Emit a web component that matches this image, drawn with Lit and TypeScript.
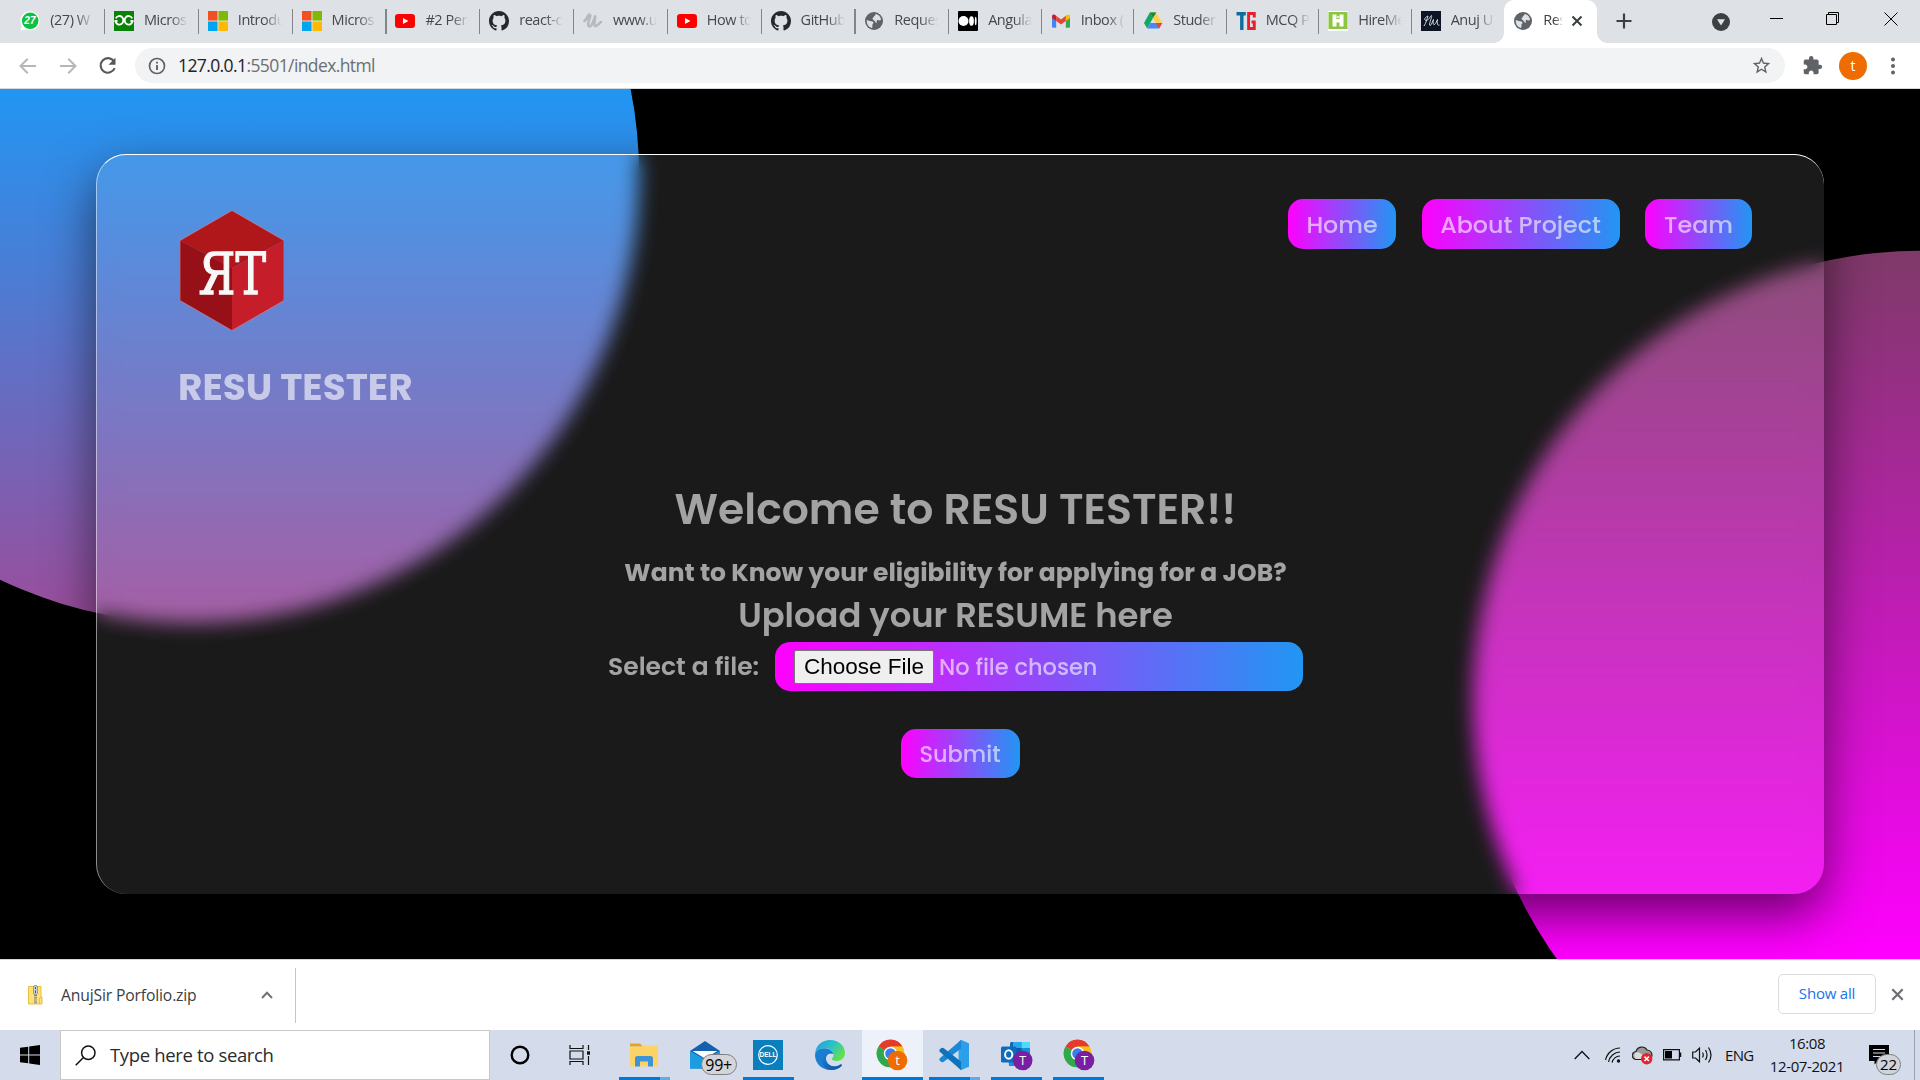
import { LitElement, html, svg, css, nothing } from "lit";
import { customElement } from "lit/decorators.js";
import { classMap } from "lit/directives/class-map.js";

const uiFont = css`"Open Sans", "Noto Sans", "Liberation Sans", sans-serif`;
const pageFont = css`Poppins, Inter, "Liberation Sans", sans-serif`;

/* ---------- favicons, 20x20 ---------- */

const fav = (body: unknown) => html`<svg class="fav" width="20" height="20" viewBox="0 0 20 20">${body}</svg>`;

const icons = {
  whatsapp: fav(svg`<path d="M0.600 19.600 L1.800 14.600 A9.600 9.400 0 1 1 6 18.300 Z" fill="#fff"/><circle cx="10.200" cy="9.800" r="8.300" fill="#0fc143"/><text x="9.900" y="13.400" font-size="10" font-weight="700" font-family="Liberation Sans, sans-serif" font-style="italic" text-anchor="middle" fill="#fff">27</text>`),
  gfg: fav(svg`<rect width="20" height="20" fill="#0a8205"/><path d="M1.800 7.300 A4 4.300 0 1 1 1.500 10.500 M18.200 7.300 A4 4.300 0 1 0 18.500 10.500 M0.500 10 H3.500 M16.500 10 H19.500" fill="none" stroke="#fff" stroke-width="1.900"/>`),
  microsoft: fav(svg`<rect width="9.500" height="9.500" fill="#f25022"/><rect x="10.500" width="9.500" height="9.500" fill="#7fba00"/><rect y="10.500" width="9.500" height="9.500" fill="#00a4ef"/><rect x="10.500" y="10.500" width="9.500" height="9.500" fill="#ffb900"/>`),
  youtube: fav(svg`<rect y="3" width="20" height="14" rx="3.200" fill="#f00"/><path d="M8 7 L13.400 10 L8 13 Z" fill="#fff"/>`),
  github: fav(svg`<path transform="scale(1.25)" fill="#24292e" d="M8 0C3.58 0 0 3.58 0 8c0 3.54 2.29 6.53 5.47 7.59.4.07.55-.17.55-.38 0-.19-.01-.82-.01-1.49-2.01.37-2.53-.49-2.69-.94-.09-.23-.48-.94-.82-1.13-.28-.15-.68-.52-.01-.53.63-.01 1.08.58 1.23.82.72 1.21 1.87.87 2.33.66.07-.52.28-.87.51-1.07-1.78-.2-3.64-.89-3.64-3.95 0-.87.31-1.59.82-2.15-.08-.2-.36-1.02.08-2.12 0 0 .67-.21 2.2.82.64-.18 1.32-.27 2-.27s1.36.09 2 .27c1.53-1.04 2.2-.82 2.2-.82.44 1.1.16 1.92.08 2.12.51.56.82 1.27.82 2.15 0 3.07-1.87 3.75-3.65 3.95.29.25.54.73.54 1.48 0 1.07-.01 1.93-.01 2.2 0 .21.15.46.55.38A8.01 8.01 0 0 0 16 8c0-4.42-3.58-8-8-8z"/>`),
  udemy: fav(svg`<path d="M1.500 10 C4 8 5 5 5.500 4 C6 3 8 3.500 7 6 C5.500 10 4 15 6.500 15.500 C9.500 15.500 11 8 12.500 4.500 C12 8 10.500 14 12 15 C13.500 15.800 16 12.500 18 11" fill="none" stroke="#b6b9bd" stroke-width="2.600" stroke-linecap="round"/>`),
  globe: fav(svg`<circle cx="10" cy="10" r="9" fill="#5f6368"/><path d="M2.800 9 C5 9.500 6.500 10.500 8.500 10.500 C10 11 9.600 12.600 8.600 13 C8 14 9 15.500 8 17 C4.500 16.200 2.500 13 2.800 9 Z M11.500 3 C14 3.300 16.500 5.200 17.100 8.500 C15.500 10.500 14.500 8.500 13 9.200 C12 10.500 13.500 11.200 12.500 12 C11 11 10.500 9.500 9 8.500 C7.500 7.500 9.500 7 9.600 6 C9.500 5 11.500 5 11.500 3 Z" fill="#dee1e6"/>`),
  medium: fav(svg`<rect width="20" height="20" rx="1" fill="#000"/><circle cx="5.500" cy="10" r="5" fill="#fff"/><ellipse cx="13.500" cy="10" rx="2.400" ry="4.700" fill="#fff"/><ellipse cx="17.700" cy="10" rx="0.900" ry="4.200" fill="#fff"/>`),
  gmail: fav(svg`<path d="M1 5 V15.500 Q1 16.800 2.300 16.800 H5.200 V8.500 Z" fill="#4285f4"/><path d="M19 5 V15.500 Q19 16.800 17.700 16.800 H14.800 V8.500 Z" fill="#34a853"/><path d="M14.800 4.800 L16.200 3.800 Q19 2.600 19 5.600 V7 L14.800 10 Z" fill="#fbbc04"/><path d="M1 7 V5.600 Q1 2.600 3.800 3.800 L5.200 4.800 V10 Z" fill="#c5221f"/><path d="M5.200 4.800 L10 8.400 L14.800 4.800 V10 L10 13.600 L5.200 10 Z" fill="#ea4335"/>`),
  drive: fav(svg`<path d="M6.800 1.500 H13.200 L10 7 L4.200 17.500 L1 12 Z" fill="#11a861"/><path d="M6.800 1.500 H13.200 L19.200 12 H12.900 Z" fill="#ffcf48"/><path d="M4.200 17.500 L7.300 12 H19.200 L16 17.500 Z" fill="#4688f4"/><path d="M13 12 H19.200 L16.100 17.400 Z" fill="#ea4335"/><path d="M6.800 1.500 H13.200 L10 7 Z" fill="#0d8b42"/>`),
  tg: fav(svg`<path d="M0.500 2.800 H9.800 M5.800 1.500 V19" fill="none" stroke="#0d6e9e" stroke-width="3.400"/><path d="M18.300 6.500 V2.500 H12.600 V17.500 H18.300 V11 H15.500" fill="none" stroke="#e8202c" stroke-width="2.900"/>`),
  hire: fav(svg`<rect width="20" height="20" fill="#fff"/><path d="M0.500 1 H19.500 V18 H0.500 Z" fill="#8cc63f"/><path d="M4.500 3.500 H8.500 V8 H11.500 V3.500 H15.500 V15.500 H11.500 V11.500 H8.500 V15.500 H4.500 Z" fill="#fff"/><circle cx="10" cy="6" r="1" fill="#fff"/>`),
  anuj: fav(svg`<rect width="20" height="20" fill="#0d1424"/><path d="M3 15 C5 12 6 8 7 5 C4 6 2.500 9 5 9.500 C8 9.500 9 5 10.500 4.500 C11.500 6 7 14 9 14.500 C11 14 11.500 9.500 12.500 8.500 C12 12 12 14 13.500 13.500 C15 12.500 15.500 10 16.500 8.500 C16 12 16 15 18.500 14" fill="none" stroke="#dfe3ea" stroke-width="0.900"/>`),
};

const tabs: Array<[keyof typeof icons, string]> = [
  ["whatsapp", "(27) W"],
  ["gfg", "Micros"],
  ["microsoft", "Introdu"],
  ["microsoft", "Micros"],
  ["youtube", "#2 Pers"],
  ["github", "react-c"],
  ["udemy", "www.u"],
  ["youtube", "How to"],
  ["github", "GitHub"],
  ["globe", "Reques"],
  ["medium", "Angula"],
  ["gmail", "Inbox ("],
  ["drive", "Studer"],
  ["tg", "MCQ P"],
  ["hire", "HireMe"],
  ["anuj", "Anuj U"],
];

@customElement("tab-strip")
class TabStrip extends LitElement {
  static styles = css`
    :host { display: flex; height: 43px; background: #dee1e6; padding-left: 11px; font: 14.500px/20px ${uiFont}; color: #45494d; }
    .tab { display: flex; align-items: center; box-sizing: border-box; width: 93.800px; height: 43px; padding: 0 0 1px 9.200px; flex: none; position: relative; }
    .narrow { width: 92.500px; }
    .tab:not(.last)::after { content: ""; position: absolute; right: -0.500px; top: 9px; width: 1.300px; height: 25px; background: #82868b; }
    .fav { flex: none; display: block; }
    .label { margin: -2px 0 0 10px; width: 44px; overflow: hidden; white-space: nowrap; letter-spacing: -0.450px; -webkit-mask-image: linear-gradient(90deg, #000 60%, transparent 100%); mask-image: linear-gradient(90deg, #000 60%, transparent 100%); }
    .active { background: #fff; border-radius: 10px 10px 0 0; width: 93px; color: #3c4043; }
    .active .label { width: 20px; }
    .active::before { content: ""; position: absolute; left: -10px; right: -10px; bottom: 0; height: 10px; background: radial-gradient(circle at 0 0, transparent 9.500px, #fff 10px) 0 0 / 10px 10px no-repeat, radial-gradient(circle at 100% 0, transparent 9.500px, #fff 10px) 100% 0 / 10px 10px no-repeat; }
    .x { margin-left: 8px; flex: none; }
    .plus { margin: 13px 0 0 19px; }
    .controls { margin-left: auto; display: flex; align-items: flex-start; padding-right: 22px; }
    .drop { margin: 13px 40px 0 0; }
    .min { margin: 12px 43px 0 0; }
    .max { margin: 12px 44px 0 0; }
    .close { margin-top: 12px; }
  `;
  render() {
    return html`
      ${tabs.map(([icon, text], i) => html`<div class=${classMap({ tab: true, narrow: i > 9, last: i === tabs.length - 1 })}>${icons[icon]}<span class="label">${text}</span></div>`)}
      <div class="tab last active">
        ${icons.globe}<span class="label">Res</span>
        <svg class="x" width="12" height="12" viewBox="0 0 12 12"><path d="M1.500 1.500 L10.500 10.500 M10.500 1.500 L1.500 10.500" stroke="#3c4043" stroke-width="2.100" fill="none"/></svg>
      </div>
      <svg class="plus" width="16" height="16" viewBox="0 0 16 16"><path d="M8 0.500 V15.500 M0.500 8 H15.500" stroke="#3c4043" stroke-width="2.200"/></svg>
      <div class="controls">
        <svg class="drop" width="18" height="18" viewBox="0 0 18 18"><circle cx="9" cy="9" r="9" fill="#3c4043"/><path d="M5 6.300 H13 L9 12.600 Z" fill="#dee1e6"/></svg>
        <svg class="min" width="13" height="14" viewBox="0 0 13 14"><path d="M0 6.500 H13" stroke="#000"/></svg>
        <svg class="max" width="14" height="14" viewBox="0 0 14 14"><path d="M0.500 2.500 H10.500 V12.500 H0.500 Z M2.500 2.500 V0.500 H12.500 V10.500 H10.500" fill="none" stroke="#000"/></svg>
        <svg class="close" width="14" height="14" viewBox="0 0 14 14"><path d="M0.500 0.500 L13.500 13.500 M13.500 0.500 L0.500 13.500" stroke="#000" fill="none"/></svg>
      </div>`;
  }
}

@customElement("address-bar")
class AddressBar extends LitElement {
  static styles = css`
    :host { display: flex; align-items: center; box-sizing: border-box; height: 46px; background: #fff; border-bottom: 1px solid #d5d7da; padding: 0 21px 0 18px; font: 17.500px/24px ${uiFont}; }
    svg { display: block; flex: none; }
    .fwd { margin-left: 20px; }
    .reload { margin-left: 20px; }
    .box { display: flex; align-items: center; flex: 1; height: 35px; margin: 0 17px 0 17px; border-radius: 18px; background: #f1f3f4; box-sizing: border-box; padding: 0 13px 0 13px; }
    .url { margin: -2px 0 0 12px; color: #6b6f73; letter-spacing: -0.600px; }
    .host { color: #202124; }
    .star { margin-left: auto; }
    .avatar { width: 28px; height: 28px; border-radius: 50%; background: #ef6c00; color: #fff; font-size: 14px; line-height: 27px; text-align: center; margin: 0 23px 0 16px; }
    .dots { margin-right: 3px; }
  `;
  render() {
    return html`
      <svg width="20" height="20" viewBox="0 0 20 20"><path d="M18 10 H3 M9.700 2.800 L2.500 10 L9.700 17.200" fill="none" stroke="#b5b7ba" stroke-width="2"/></svg>
      <svg class="fwd" width="20" height="20" viewBox="0 0 20 20"><path d="M2 10 H17 M10.300 2.800 L17.500 10 L10.300 17.200" fill="none" stroke="#b5b7ba" stroke-width="2"/></svg>
      <svg class="reload" width="20" height="20" viewBox="0 0 20 20"><path d="M15.800 5 A7.300 7.300 0 1 0 16.700 12.200" fill="none" stroke="#54585c" stroke-width="2.100"/><path d="M17.500 1.800 V8.800 H10.500 Z" fill="#54585c"/></svg>
      <div class="box">
        <svg width="18" height="18" viewBox="0 0 18 18"><circle cx="9" cy="9" r="7.500" fill="none" stroke="#5f6368" stroke-width="1.700"/><path d="M9 8 V13 M9 4.800 V6.600" stroke="#5f6368" stroke-width="1.900"/></svg>
        <span class="url"><span class="host">127.0.0.1</span>:5501/index.html</span>
        <svg class="star" width="21" height="21" viewBox="0 0 24 24"><path fill="#5f6368" d="M22 9.240l-7.190-.620L12 2 9.190 8.630 2 9.240l5.460 4.730L5.820 21 12 17.270 18.180 21l-1.630-7.030L22 9.240zM12 15.400l-3.760 2.270 1-4.280-3.320-2.880 4.380-.380L12 6.100l1.710 4.040 4.380.380-3.320 2.880 1 4.280L12 15.400z"/></svg>
      </div>
      <svg width="21" height="21" viewBox="0 0 24 24"><path fill="#5f6368" d="M20.500 11H19V7c0-1.100-.900-2-2-2h-4V3.500a2.500 2.500 0 0 0-5 0V5H4c-1.100 0-1.990.900-1.990 2v3.800H3.500c1.490 0 2.700 1.210 2.700 2.700s-1.210 2.700-2.700 2.700H2V20c0 1.100.900 2 2 2h3.800v-1.500c0-1.490 1.210-2.700 2.700-2.700s2.700 1.210 2.700 2.700V22H17c1.100 0 2-.900 2-2v-4h1.500a2.500 2.500 0 0 0 0-5z"/></svg>
      <div class="avatar">t</div>
      <svg class="dots" width="6" height="18" viewBox="0 0 6 18"><circle cx="3" cy="2.500" r="2" fill="#5f6368"/><circle cx="3" cy="9" r="2" fill="#5f6368"/><circle cx="3" cy="15.500" r="2" fill="#5f6368"/></svg>`;
  }
}

@customElement("resume-page")
class ResumePage extends LitElement {
  static styles = css`
    :host { display: flex; align-items: center; justify-content: center; position: relative; overflow: hidden; height: 870px; background: #000; font: 500 23.750px/34px ${pageFont}; color: rgba(255, 255, 255, 0.6); isolation: isolate; }
    :host::before, :host::after { content: ""; position: absolute; inset: 0; z-index: -1; }
    :host::before { background: linear-gradient(#614746, #f0f); clip-path: circle(30% at right 70%); }
    :host::after { background: linear-gradient(#2196f3, #e91e63); clip-path: circle(30% at 10% 10%); }
    .card { box-sizing: border-box; width: 1728px; height: 740px; border-radius: 30px; background: rgba(255, 255, 255, 0.1); border-top: 1px solid #fff; border-left: 1px solid rgba(255, 255, 255, 0.5); box-shadow: 0 20px 50px rgba(0, 0, 0, 0.58); backdrop-filter: blur(10px); display: flex; flex-direction: column; }
    .head { display: flex; justify-content: space-between; align-items: flex-start; height: 329px; box-sizing: border-box; padding: 44px 72px 0 83px; }
    .brand { padding-top: 11px; }
    .logo { display: block; }
    .name { margin: 32px 0 0 -2px; font-size: 37.500px; line-height: 48px; font-weight: 700; }
    .nav { display: flex; gap: 25.500px; }
    .pill { display: flex; align-items: center; justify-content: center; height: 50px; border-radius: 15px; background: linear-gradient(90deg, #f0f, #2196f3); box-sizing: border-box; white-space: nowrap; }
    .nav .pill { padding-top: 2px; }
    .home { width: 108px; } .about { width: 198px; } .team { width: 107px; }
    .main { display: flex; flex-direction: column; align-items: center; padding-right: 10px; }
    .title { margin: 0; font-size: 42.500px; line-height: 50px; font-weight: 600; }
    .ask { margin: 22px 0 0; font-size: 25px; line-height: 34px; font-weight: 700; }
    .upload { margin: 2px 0 0; font-size: 33.750px; line-height: 48px; font-weight: 600; }
    .row { display: flex; align-items: center; margin-top: 2px; }
    .select { font-size: 25px; font-weight: 600; width: 167px; white-space: nowrap; }
    .file { width: 528px; height: 49px; justify-content: flex-start; padding-left: 19px; font-size: 22.500px; }
    .choose { box-sizing: border-box; width: 140px; height: 34px; border: 1px solid #767676; border-radius: 2px; background: #efefef; color: #000; font: 22.500px/31px "Liberation Sans", sans-serif; text-align: center; padding: 0; white-space: nowrap; }
    .none { margin-left: 5px; }
    .submit { margin: 38px 0 0 9px; width: 119px; height: 49px; border: 0; font: inherit; font-size: 22.500px; color: inherit; padding: 1px 0 0; }
  `;
  render() {
    return html`
      <div class="card">
        <div class="head">
          <div class="brand">
            <svg class="logo" width="104" height="121" viewBox="0 0 104 121">
              <path d="M52 0.500 L104 30.500 L52 58 L0 30.500 Z" fill="#b0171b"/>
              <path d="M0 30.500 L52 58 V120.500 L0 90.500 Z" fill="#981017"/>
              <path d="M104 30.500 L52 58 V120.500 L104 90.500 Z" fill="#c61d2a"/>
              <path d="M52 0.500 L104 30.500 V90.500 L52 120.500 L0 90.500 V30.500 Z" fill="none" stroke="#d98a92" stroke-width="0.600"/>
              <text x="18.500" y="84" font-family="DejaVu Serif, serif" font-size="58" fill="#f8f8f8" stroke="#f8f8f8" stroke-width="1.300" textLength="67.500" lengthAdjust="spacingAndGlyphs">ЯT</text>
            </svg>
            <h1 class="name">RESU TESTER</h1>
          </div>
          <nav class="nav">
            <a class="pill home">Home</a>
            <a class="pill about">About Project</a>
            <a class="pill team">Team</a>
          </nav>
        </div>
        <div class="main">
          <h1 class="title">Welcome to RESU TESTER!!</h1>
          <h3 class="ask">Want to Know your eligibility for applying for a JOB?</h3>
          <h2 class="upload">Upload your RESUME here</h2>
          <div class="row">
            <label class="select">Select a file:</label>
            <div class="pill file"><button class="choose">Choose File</button><span class="none">No file chosen</span></div>
          </div>
          <button class="pill submit">Submit</button>
        </div>
      </div>`;
  }
}

@customElement("download-shelf")
class DownloadShelf extends LitElement {
  static styles = css`
    :host { display: flex; align-items: center; box-sizing: border-box; height: 71px; background: #fff; border-top: 1px solid #d5d5d5; padding: 0 16px 0 27px; font: 15px/20px ${uiFont}; color: #3c4043; }
    svg { display: block; flex: none; }
    .item { display: flex; align-items: center; box-sizing: border-box; width: 269px; height: 55px; border-right: 1px solid #c4c4c4; padding-right: 22px; }
    .name { margin: 0 0 0 18px; font-size: 15.700px; letter-spacing: -0.150px; white-space: nowrap; }
    .up { margin-left: auto; }
    .all { margin: -3px 15px 0 auto; width: 98px; height: 40px; box-sizing: border-box; border: 1px solid #dadce0; border-radius: 5px; color: #1a73e8; font-size: 15px; line-height: 36px; text-align: center; letter-spacing: -0.200px; }
    .x { margin-top: -1px; }
  `;
  render() {
    return html`
      <div class="item">
        <svg width="16" height="20" viewBox="0 0 16 20"><path d="M1.500 1.500 H14 V12 H15 V19 H1.500 Z" fill="#fde27a" stroke="#e9bf3f"/><path d="M14 12 Q12.500 12 12.500 14 V19" fill="none" stroke="#e9bf3f"/><rect x="6.500" y="0.500" width="4" height="9" rx="1.500" fill="#c9cfd4" stroke="#848b90" stroke-width="0.800"/><path d="M8.500 2 V4 M8.500 5.500 V8" stroke="#555"/><path d="M8.500 10 V19" stroke="#7d8487" stroke-width="3" stroke-dasharray="1.200 1"/></svg>
        <span class="name">AnujSir Porfolio.zip</span>
        <svg class="up" width="12" height="8" viewBox="0 0 12 8"><path d="M1 7 L6 1.800 L11 7" fill="none" stroke="#707478" stroke-width="2"/></svg>
      </div>
      <div class="all">Show all</div>
      <svg class="x" width="13" height="13" viewBox="0 0 13 13"><path d="M1.300 1.300 L11.700 11.700 M11.700 1.300 L1.300 11.700" stroke="#6b6f73" stroke-width="2.200"/></svg>`;
  }
}

/* ---------- taskbar app icons, 34x34 ---------- */

const app = (body: unknown) => html`<svg width="34" height="34" viewBox="0 0 34 34">${body}</svg>`;

const chrome = (badge: string, letter: string) => app(svg`
  <circle cx="15.500" cy="15.500" r="13.800" fill="#fbc116"/>
  <path d="M15.500 15.500 L3.500 8.600 A13.800 13.800 0 0 1 27.500 8.600 H15.500 Z" fill="#e33b2e"/>
  <path d="M3.500 8.600 A13.800 13.800 0 0 0 15.500 29.300 L21.500 19 L15.500 15.500 Z" fill="#2da94f"/>
  <path d="M15.500 8.700 H27.400 A13.800 13.800 0 0 1 28.800 12 H17 Z" fill="#fbc116"/>
  <circle cx="15.500" cy="15.500" r="6.800" fill="#fff"/><circle cx="15.500" cy="15.500" r="5.300" fill="#3b7ded"/>
  <circle cx="22.500" cy="22.500" r="9.800" fill="${badge}"/>
  <text x="22.500" y="27" font-size="13" font-family="Open Sans, sans-serif" text-anchor="middle" fill="#fff">${letter}</text>`);

const explorer = app(svg`<path d="M3 5.500 H13 L16 8.500 H3 Z" fill="#e8a317"/><path d="M3 8.800 H14 L16.500 7.500 H31 V27.500 Q31 28.500 30 28.500 H4 Q3 28.500 3 27.500 Z" fill="#fdd365"/><path d="M8 28.500 V20.500 Q8 18 10.500 18 H23.500 Q26 18 26 20.500 V28.500 H21 V23.500 H13 V28.500 Z" fill="#3f94d8"/>`);
const mail = app(svg`<path d="M1 13 L16 3 L31 13 V30.500 H1 Z" fill="#1460ae"/><path d="M1 13 L16 21.500 L31 13 V30.500 H1 Z" fill="#1b9de2"/><path d="M3.500 13 H28.500 L16 20.500 Z" fill="#fff"/>`);
const dell = app(svg`<rect x="2" y="2" width="30" height="30" fill="#0a7fbd"/><circle cx="17" cy="17" r="9.300" fill="none" stroke="#fff" stroke-width="1.200"/><text x="17" y="19.400" font-size="6.500" font-weight="700" font-family="Liberation Sans, sans-serif" text-anchor="middle" fill="#fff">DELL</text>`);
const edge = html`<svg width="34" height="34" viewBox="0 0 34 34">
  <defs>
    <linearGradient id="e1" x1="0" y1="0" x2="1" y2="0.600"><stop offset="0" stop-color="#1e9de4"/><stop offset="0.550" stop-color="#2bc3c4"/><stop offset="1" stop-color="#66e04c"/></linearGradient>
    <linearGradient id="e2" x1="0" y1="0" x2="1" y2="1"><stop offset="0" stop-color="#1b86d8"/><stop offset="1" stop-color="#114f9c"/></linearGradient>
  </defs>
  <path d="M2.200 15 C3 7 9.500 2 17 2 C26 2 32 8 32 15 C32 20.500 27.500 23 23.500 23 C20.500 23 18.500 22 18.900 20.500 C20 19.500 20.500 18.500 20.500 17 C20.500 13.500 17.500 10.500 12.500 10 C7.500 9.700 3.800 12 2.200 15 Z" fill="url(#e1)"/>
  <path d="M2.200 15 C4 11.500 8 9.800 12.500 10.300 C16 10.700 19.500 12.500 20.400 16 C15.500 13.500 12.500 17.500 13 21.500 C13.800 27 20.500 30.500 26.500 27 C28.500 26 29.500 27 28.500 28 C25.500 31 21 32.300 17 32 C7 31.500 1 23.500 2.200 15 Z" fill="#1a7fd2"/>
  <path d="M13 21.500 C13.800 27 20.500 30.500 26.500 27 C28.500 26 29.500 27 28.500 28 C24 32.500 18 32.500 14 31 C8 27.500 7.500 19 11.500 15.500 C15 12.600 19 14 20.400 16 C15.500 14.500 12.500 17.500 13 21.500 Z" fill="url(#e2)"/>
</svg>`;
const vscode = app(svg`<path d="M24 2 L32 5.500 V28.500 L24 32 L21.500 30 V4 Z" fill="#2aa4f0"/><path d="M24 2 L2.500 20.500 V22.500 L4.800 24.300 L6.500 24 L24 10.500 Z" fill="#1c87d3"/><path d="M24 32 L2.500 13.500 V11.500 L4.800 9.700 L6.500 10 L24 23.500 Z" fill="#0f72bd"/><path d="M24 2 L32 5.500 V28.500 L24 32 Z" fill="#2b9fea"/>`);
const outlook = app(svg`<rect x="10" y="4" width="20" height="22" rx="1.500" fill="#1066b5"/><rect x="13" y="4" width="8.500" height="6" fill="#28a8ea"/><rect x="21.500" y="4" width="8.500" height="6" fill="#50d9ff"/><rect x="13" y="10" width="8.500" height="7" fill="#0a5ba9"/><rect x="21.500" y="10" width="8.500" height="7" fill="#1a8adb"/><path d="M8 17 H31 V28 H9 Z" fill="#1a8fdd"/><rect x="1" y="8.500" width="15.500" height="16" rx="1.500" fill="#0f6cbd"/><ellipse cx="8.700" cy="16.500" rx="3.600" ry="4.200" fill="none" stroke="#fff" stroke-width="2"/><circle cx="22.700" cy="22.500" r="9.800" fill="#7b1fa2"/><text x="22.700" y="27" font-size="12.500" font-family="Open Sans, sans-serif" text-anchor="middle" fill="#fff">T</text>`);

type AppItem = { icon: unknown; line?: "one" | "many"; active?: boolean; badge?: string };
const apps: AppItem[] = [
  { icon: explorer, line: "many" },
  { icon: mail, badge: "99+" },
  { icon: dell, line: "one" },
  { icon: edge },
  { icon: chrome("#ef6c00", "t"), line: "one", active: true },
  { icon: vscode, line: "many" },
  { icon: outlook, line: "one" },
  { icon: chrome("#7b1fa2", "T"), line: "one" },
];

@customElement("task-bar")
class TaskBar extends LitElement {
  static styles = css`
    :host { display: flex; align-items: center; height: 50px; background: #d4dcec; font: 15px/20px ${uiFont}; color: #111; }
    svg { display: block; flex: none; }
    .start { width: 60px; display: flex; justify-content: center; }
    .search { display: flex; align-items: center; box-sizing: border-box; width: 430px; height: 50px; background: #fff; border: 1px solid #c8c8c8; padding-left: 14px; font-size: 18.500px; color: #2b2b2b; letter-spacing: -0.350px; }
    .search span { margin-left: 14px; padding-bottom: 1px; }
    .tool { width: 60px; display: flex; justify-content: center; }
    .apps { display: flex; gap: 1.100px; margin-left: 3.500px; }
    .app { position: relative; width: 61px; height: 50px; display: flex; align-items: center; justify-content: center; }
    .app.active { background: #edf1f9; }
    .line { position: absolute; bottom: 0; left: 5px; right: 5px; height: 3px; background: #0078d7; }
    .active .line { left: 0; right: 0; }
    .many .line { background: linear-gradient(90deg, #0078d7 41px, #64aae6 41px); }
    .badge { position: absolute; left: 25px; top: 24px; width: 34px; height: 19px; border: 1px solid #7d7f83; border-radius: 11px; background: #d3d5d8; font: 500 16px/20px ${uiFont}; text-align: center; color: #000; letter-spacing: -0.300px; }
    .tray { margin-left: auto; display: flex; align-items: center; height: 50px; }
    .lang { margin-left: 12px; width: 28px; letter-spacing: -0.700px; padding-bottom: 1px; }
    .clock { display: flex; flex-direction: column; justify-content: center; width: 84px; margin-left: 12px; text-align: center; line-height: 23px; letter-spacing: -0.400px; padding-bottom: 1px; }
    .notes { position: relative; margin-left: 20px; width: 45px; height: 50px; }
    .notes svg { margin: 15px 0 0; }
    .count { position: absolute; left: 7px; top: 24px; width: 23px; height: 19px; border: 1px solid #7d7f83; border-radius: 11px; background: #d0d3d8; font: 500 15px/19px ${uiFont}; text-align: center; color: #000; }
    .peek { width: 5px; height: 50px; border-left: 1px solid #98a0ae; }
  `;
  render() {
    return html`
      <div class="start"><svg width="20" height="20" viewBox="0 0 20 20"><path d="M0 2.800 L8.200 1.700 V9.500 H0 Z M9.200 1.500 L20 0 V9.500 H9.200 Z M0 10.500 H8.200 V18.300 L0 17.200 Z M9.200 10.500 H20 V20 L9.200 18.500 Z" fill="#000"/></svg></div>
      <div class="search">
        <svg width="21" height="21" viewBox="0 0 21 21"><circle cx="13.300" cy="7.700" r="6.700" fill="none" stroke="#111" stroke-width="1.500"/><path d="M8.500 12.500 L0.700 20.300" stroke="#111" stroke-width="1.500"/></svg>
        <span>Type here to search</span>
      </div>
      <div class="tool"><svg width="20" height="20" viewBox="0 0 20 20"><circle cx="10" cy="10" r="8.300" fill="none" stroke="#000" stroke-width="2.400"/></svg></div>
      <div class="tool"><svg width="22" height="20" viewBox="0 0 22 20"><path d="M1 0 V3.500 H14 V0 M1 20 V16.500 H14 V20 M1 6 H14 V14 H1 Z M19.500 0 V5 M19.500 11 V20" fill="none" stroke="#111" stroke-width="1.200"/><rect x="18" y="6.300" width="3" height="3.400" fill="#111"/></svg></div>
      <div class="apps">
        ${apps.map((a) => html`<div class=${classMap({ app: true, active: !!a.active, many: a.line === "many" })}>${a.icon}${a.line ? html`<i class="line"></i>` : nothing}${a.badge ? html`<span class="badge">${a.badge}</span>` : nothing}</div>`)}
      </div>
      <div class="tray">
        <svg width="16" height="10" viewBox="0 0 16 10"><path d="M0.700 9 L8 1.500 L15.300 9" fill="none" stroke="#111" stroke-width="1.300"/></svg>
        <svg width="42" height="18" viewBox="-15 0 42 18"><g fill="none" stroke="#111" stroke-width="1.200"><path d="M0.500 14 A15 15 0 0 1 15 2"/><path d="M3.500 16 A12 12 0 0 1 15 6"/><path d="M7 16.500 A9 9 0 0 1 15 10"/></g><circle cx="13.500" cy="15" r="1.700" fill="#111"/></svg>
        <svg width="22" height="20" viewBox="0 0 22 20"><path d="M4.500 14.500 A4 4 0 0 1 4 6.500 A6 6 0 0 1 15 5 A5 5 0 0 1 19.500 12 L16 14.500 Z" fill="#9b9b9b" stroke="#222" stroke-width="1.200"/><path d="M4.500 14 A3.700 3.700 0 0 1 5 7 Q9 7.500 14 13 L13 14 Z" fill="#dcdcdc"/><circle cx="14.700" cy="13.800" r="5.700" fill="#e02432"/><path d="M12.500 11.600 L16.900 16 M16.900 11.600 L12.500 16" stroke="#fff" stroke-width="1.500"/></svg>
        <svg width="38" height="12" viewBox="-9 0 38 12"><path d="M0.600 0.600 H16.400 V10.900 H0.600 Z" fill="none" stroke="#111" stroke-width="1.200"/><rect x="2" y="2" width="7" height="7.500" fill="#000"/><path d="M17.500 3.500 V8" stroke="#111" stroke-width="1.500"/></svg>
        <svg width="21" height="18" viewBox="0 0 21 18"><path d="M0.700 6 H3.500 L7.500 2.200 V15.800 L3.500 12 H0.700 Z" fill="none" stroke="#111" stroke-width="1.200"/><path d="M10.500 6.500 Q12 9 10.500 11.500 M13.500 4 Q16.500 9 13.500 14 M16.500 1.500 Q21.500 9 16.500 16.500" fill="none" stroke="#111" stroke-width="1.200"/></svg>
        <span class="lang">ENG</span>
        <div class="clock"><span>16:08</span><span>12-07-2021</span></div>
        <div class="notes"><svg width="20" height="20" viewBox="0 0 20 20"><path d="M0 0 H20 V16 H9 L5.500 19.500 V16 H0 Z" fill="#000"/><path d="M4 4.500 H16 M4 8 H16 M4 11.500 H12" stroke="#d4dcec" stroke-width="1.200"/></svg><span class="count">22</span></div>
        <div class="peek"></div>
      </div>`;
  }
}

@customElement("app-root")
class AppRoot extends LitElement {
  static styles = css`
    :host { display: flex; flex-direction: column; width: 1920px; height: 1080px; overflow: hidden; background: #fff; }
  `;
  render() {
    return html`<tab-strip></tab-strip><address-bar></address-bar><resume-page></resume-page><download-shelf></download-shelf><task-bar></task-bar>`;
  }
}
